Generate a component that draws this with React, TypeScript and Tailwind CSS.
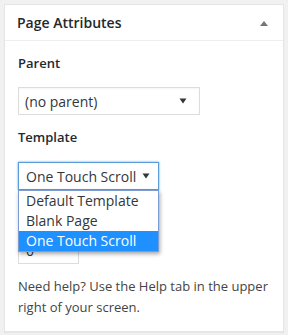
const font = { fontFamily: '"Open Sans", "Noto Sans", sans-serif' }

function Caret({ className = '' }: { className?: string }) {
  return (
    <svg width="8" height="6" viewBox="0 0 8 6" className={className}>
      <path d="M0.5 0.5 H7.5 L4 5.5 Z" fill="#32373c" />
    </svg>
  )
}

export default function App() {
  return (
    <div className="w-[288px] h-[335px] bg-[#f1f1f1] pt-[4px] pl-[4px] pr-[4px]" style={font}>
      <div className="h-[328px] bg-white border border-[#e5e5e5] shadow-[0_1px_1px_rgba(0,0,0,0.04)]">
        {/* header */}
        <div className="h-[36px] border-b border-[#eeeeee] flex items-center justify-between pl-[12px] pr-[14px]">
          <h2 className="text-[14px] font-semibold text-[#23282d] leading-none">Page Attributes</h2>
          <svg width="10" height="6" viewBox="0 0 10 6">
            <path d="M1 6 L5 1 L9 6 Z" fill="#72777c" />
          </svg>
        </div>

        <div className="px-[13px] pt-[13px]">
          <p className="text-[13px] font-semibold text-[#23282d] leading-[19px]">Parent</p>
          <div className="mt-[14px] w-[182px] h-[28px] border border-[#dddddd] flex items-center justify-between pl-[6px] pr-[12px] text-[14px] text-[#32373c] whitespace-nowrap shadow-[inset_0_1px_2px_rgba(0,0,0,0.04)]">
            <span>(no parent)</span>
            <Caret />
          </div>

          <p className="mt-[13px] text-[13px] font-semibold text-[#23282d] leading-[19px]">Template</p>
          <div className="relative mt-[15px]">
            <div className="w-[141px] h-[28px] border border-[#5b9dd9] flex items-center justify-between pl-[7px] pr-[8px] text-[14px] text-[#32373c] whitespace-nowrap shadow-[0_0_2px_rgba(30,140,190,0.8)]">
              <span>One Touch Scroll</span>
              <Caret />
            </div>
            {/* open dropdown list */}
            <ul className="absolute left-0 top-[28px] z-10 w-[141px] bg-white border border-[#7a9cd3] shadow-[1px_2px_4px_rgba(0,0,0,0.35)] text-[14px] leading-[20px] text-[#32373c] whitespace-nowrap">
              <li className="pl-[7px]">Default Template</li>
              <li className="pl-[7px]">Blank Page</li>
              <li className="pl-[7px] bg-[#1e90ff] text-white">One Touch Scroll</li>
            </ul>

            <p className="mt-[14px] text-[13px] font-semibold text-[#23282d] leading-[19px]">Order</p>
            <div className="mt-[13px] w-[61px] h-[28px] border border-[#dddddd] flex items-center pl-[7px] text-[14px] text-[#32373c]">
              0
            </div>
          </div>

          <p className="mt-[12px] text-[13px] leading-[21px] text-[#444444]">
            Need help? Use the Help tab in the upper right of your screen.
          </p>
        </div>
      </div>
    </div>
  )
}
